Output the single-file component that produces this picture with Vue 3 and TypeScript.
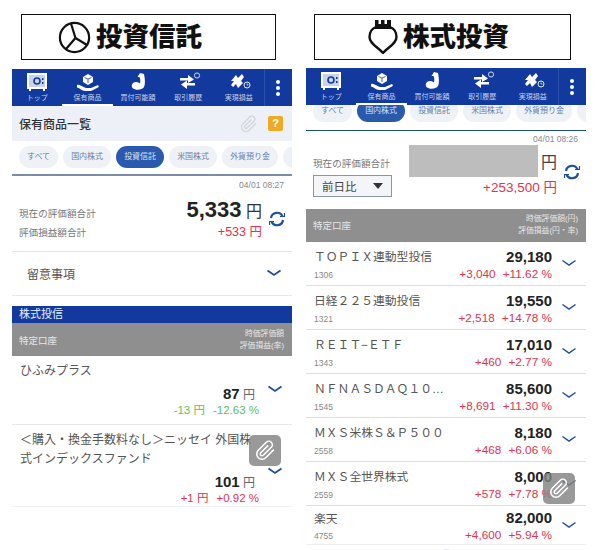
<script setup lang="ts">
interface Stock {
  name: string
  code: string
  price: string
  diff: string
  rate: string
}

const navItems = [
  { label: 'トップ', key: 'safe' },
  { label: '保有商品', key: 'hand' },
  { label: '買付可能額', key: 'arm' },
  { label: '取引履歴', key: 'swap' },
  { label: '実現損益', key: 'gain' },
]

const chips = ['すべて', '国内株式', '投資信託', '米国株式', '外貨預り金']

const stocks: Stock[] = [
  { name: 'ＴＯＰＩＸ連動型投信', code: '1306', price: '29,180', diff: '+3,040', rate: '+11.62 %' },
  { name: '日経２２５連動投信', code: '1321', price: '19,550', diff: '+2,518', rate: '+14.78 %' },
  { name: 'ＲＥＩＴ−ＥＴＦ', code: '1343', price: '17,010', diff: '+460', rate: '+2.77 %' },
  { name: 'ＮＦＮＡＳＤＡＱ１０…', code: '1545', price: '85,600', diff: '+8,691', rate: '+11.30 %' },
  { name: 'ＭＸＳ米株Ｓ＆Ｐ５００', code: '2558', price: '8,180', diff: '+468', rate: '+6.06 %' },
  { name: 'ＭＸＳ全世界株式', code: '2559', price: '8,000', diff: '+578', rate: '+7.78 %' },
  { name: '楽天', code: '4755', price: '82,000', diff: '+4,600', rate: '+5.94 %' },
]

const funds = [
  { name: 'ひふみプラス', price: '87', diff: '-13 円', rate: '-12.63 %', loss: true },
  { name: '＜購入・換金手数料なし＞ニッセイ 外国株式インデックスファンド', price: '101', diff: '+1 円', rate: '+0.92 %', loss: false },
]

const panels = [
  { id: 'fund', title: '投資信託', active: 2 },
  { id: 'stock', title: '株式投資', active: 1 },
]

const clipPath = 'M21.44 11.05l-9.19 9.19a6 6 0 0 1-8.49-8.49l9.19-9.19a4 4 0 0 1 5.66 5.66l-9.2 9.19a2 2 0 0 1-2.83-2.83l8.49-8.48'
</script>

<template>
  <div class="page">
    <section v-for="panel in panels" :key="panel.id" class="column" :class="panel.id">
      <header class="heading">
        <svg v-if="panel.id === 'fund'" width="33" height="33" viewBox="0 0 33 33" fill="none" stroke="#111" stroke-width="2.2">
          <circle cx="16.5" cy="16.5" r="14.6" />
          <path d="M13 2.5 L17.5 17 L29 24 M17.5 17 L8 28" />
        </svg>
        <svg v-else width="30" height="34" viewBox="0 0 30 34" fill="none">
          <path d="M7 0 h3.500 v4 h2.500 V0 h3.500 v4 h2.500 V0 h4 v9 H7 Z" fill="#111" />
          <path d="M8 7 C3 9 1.500 13 1.500 17 C1.500 24 10 27 15 33 C20 27 28.500 24 28.500 17 C28.500 13 27 9 22 7" stroke="#111" stroke-width="2.400" />
        </svg>
        <h1>{{ panel.title }}</h1>
      </header>

      <div class="phone">
        <nav class="nav">
          <div v-for="(item, i) in navItems" :key="item.key" class="nav-item" :class="{ current: i === 1 }">
            <svg width="26" height="20" viewBox="0 0 26 20" fill="#fff">
              <template v-if="item.key === 'safe'">
                <path d="M3 1 h20 v16 h-20 Z" />
                <path d="M5 3 h16 v12 H5 Z" fill="#c9d4ea" />
                <circle cx="13" cy="9" r="3" fill="none" stroke="#123a9e" stroke-width="1.600" />
                <path d="M18 6 h1.500 v2 H18 Z M18 10 h1.500 v2 H18 Z" fill="#123a9e" />
                <path d="M5 17 h2 v2 H5 Z M19 17 h2 v2 h-2 Z" />
              </template>
              <template v-else-if="item.key === 'hand'">
                <path d="M8 5 L13 2 L18 5 V10 L13 13 L8 10 Z" />
                <path d="M13 7 V11 M9.500 5.500 L13 7 L16.500 5.500" stroke="#123a9e" fill="none" stroke-width=".8" />
                <path d="M2 13 C5 12 7 15 11 16 H16 L23 13 C24 14 24 15 23 15.500 L16 19 H10 C7 19 5 16 2 15.500 Z" />
              </template>
              <template v-else-if="item.key === 'arm'">
                <path d="M15 1 L19 2 C20 7 20.500 12 19 15 C17 18.500 10 18.500 7.500 16 C5.500 13 8 9.500 11.500 10 C13 10.300 14 10.800 15 11.500 C15.500 9 15.500 7 14.500 5 L12.500 5 Z" />
              </template>
              <template v-else-if="item.key === 'swap'">
                <path d="M5 6 H13 V3 L19 7.500 L13 11 V8.500 H5 Z" />
                <path d="M20 11 H12 V8.500 L6 12.500 L12 17 V13.500 H20 Z" />
                <circle cx="22" cy="3.500" r="2.600" fill="none" stroke="#fff" stroke-width=".8" />
              </template>
              <template v-else>
                <path d="M5 9 L10 3 L12 6 L16 2 L18 5 L15 9 L17 11 L12 16 L10 12 L7 15 L5 13 L8 9 Z" />
                <circle cx="21" cy="13" r="3" fill="none" stroke="#fff" stroke-width=".9" />
                <path d="M21 11.500 V13 H22.500" fill="none" stroke="#fff" stroke-width=".7" />
              </template>
            </svg>
            <span>{{ item.label }}</span>
          </div>
          <div class="nav-more"><i></i><i></i><i></i></div>
        </nav>

        <div v-if="panel.id === 'fund'" class="title-bar">
          <h2>保有商品一覧</h2>
          <svg class="title-clip" width="18" height="18" viewBox="0 0 24 24" fill="none" stroke="#d3d6dc" stroke-width="1.800">
            <path :d="clipPath" />
          </svg>
          <span class="help">?</span>
        </div>

        <div class="chips">
          <span v-for="(chip, i) in chips" :key="chip" class="chip" :class="{ on: i === panel.active }">{{ chip }}</span>
          <span class="chip"></span>
        </div>

        <template v-if="panel.id === 'fund'">
          <p class="stamp">04/01 08:27</p>
          <div class="summary">
            <div class="summary-text">
              <div class="summary-row">
                <span class="label">現在の評価額合計</span>
                <span class="total"><b>5,333</b> 円</span>
              </div>
              <div class="summary-row low">
                <span class="label">評価損益額合計</span>
                <span class="gain">+533 円</span>
              </div>
            </div>
            <svg class="refresh" width="16" height="16" viewBox="0 0 16 16" fill="none" stroke="#1d4f9c" stroke-width="2.200">
              <path d="M2 7 A6 6 0 0 1 13.500 5.500 M14 9 A6 6 0 0 1 2.500 10.500" />
              <path d="M11 5.500 H15.500 V2" stroke-width="1.200" />
              <path d="M5 10.500 H.5 V14" stroke-width="1.200" />
            </svg>
          </div>
          <div class="notice">
            <span>留意事項</span>
            <svg width="16" height="8" viewBox="0 0 16 8" fill="none" stroke="#1d4f9c" stroke-width="1.800"><path d="M1.500 1.500 L8 6 L14.500 1.500" /></svg>
          </div>
          <div class="band">株式投信</div>
          <div class="table-head">
            <span>特定口座</span>
            <span class="head-right">時価評価額<br />評価損益(率)</span>
          </div>
          <div v-for="(fund, i) in funds" :key="fund.name" class="fund-item" :class="{ last: i === funds.length - 1 }">
            <p class="fund-name">{{ fund.name }}</p>
            <div class="fund-price"><b>{{ fund.price }}</b> 円</div>
            <div class="fund-diff" :class="{ loss: fund.loss }"><span>{{ fund.diff }}</span><span>{{ fund.rate }}</span></div>
            <svg class="fund-chevron" width="16" height="8" viewBox="0 0 16 8" fill="none" stroke="#1d4f9c" stroke-width="1.800"><path d="M1.500 1.500 L8 6 L14.500 1.500" /></svg>
          </div>
        </template>

        <template v-else>
          <p class="stamp">04/01 08:26</p>
          <div class="summary">
            <div class="summary-left">
              <span class="label">現在の評価額合計</span>
              <div class="select">前日比<i></i></div>
            </div>
            <div class="summary-right">
              <div class="hidden-total"><span class="mask"></span><span class="yen">円</span></div>
              <span class="gain">+253,500 円</span>
            </div>
            <svg class="refresh" width="16" height="16" viewBox="0 0 16 16" fill="none" stroke="#1d4f9c" stroke-width="2.200">
              <path d="M2 7 A6 6 0 0 1 13.500 5.500 M14 9 A6 6 0 0 1 2.500 10.500" />
              <path d="M11 5.500 H15.500 V2" stroke-width="1.200" />
              <path d="M5 10.500 H.5 V14" stroke-width="1.200" />
            </svg>
          </div>
          <div class="table-head">
            <span>特定口座</span>
            <span class="head-right">時価評価額(円)<br />評価損益(円・率)</span>
          </div>
          <div v-for="(stock, i) in stocks" :key="stock.code" class="stock-row" :class="{ last: i === stocks.length - 1 }">
            <div class="stock-left">
              <p class="stock-name">{{ stock.name }}</p>
              <p class="stock-code">{{ stock.code }}</p>
            </div>
            <div class="stock-right">
              <b>{{ stock.price }}</b>
              <div class="stock-diff"><span>{{ stock.diff }}</span><span>{{ stock.rate }}</span></div>
            </div>
            <svg class="stock-chevron" width="16" height="8" viewBox="0 0 16 8" fill="none" stroke="#1d4f9c" stroke-width="1.500"><path d="M1.500 1.500 L8 6 L14.500 1.500" /></svg>
          </div>
          <div class="scroll-top"></div>
        </template>

        <div class="clip-float">
          <svg width="21" height="21" viewBox="0 0 24 24" fill="none" stroke="#fff" stroke-width="1.800">
            <path :d="clipPath" />
          </svg>
        </div>
      </div>
    </section>
  </div>
</template>

<style>
html,
body {
  margin: 0;
  background: #fff;
}
</style>

<style scoped>
.page {
  display: flex;
  gap: 14px;
  width: 600px;
  height: 550px;
  padding-left: 12px;
  box-sizing: border-box;
  overflow: hidden;
  font-family: "Liberation Sans", "Noto Sans CJK JP", sans-serif;
  color: #444;
}
.column {
  width: 280px;
  padding-top: 14px;
}
p,
h1,
h2 {
  margin: 0;
  font-weight: 400;
}

.heading {
  display: flex;
  align-items: center;
  height: 46px;
  box-sizing: border-box;
  border: 1.500px solid #111;
  margin: 0 16px 9px 9px;
  padding-left: 36px;
  gap: 5px;
}
.stock .heading {
  margin: 0 15px 8px 8px;
  padding-left: 53px;
  gap: 5px;
}
.heading h1 {
  font-size: 26.500px;
  font-weight: 900;
  color: #111;
  line-height: 1;
}

.phone {
  position: relative;
}

.nav {
  position: relative;
  z-index: 2;
  display: flex;
  height: 37px;
  background: #123a9e;
}
.nav-item {
  width: 50.400px;
  box-sizing: border-box;
  display: flex;
  flex-direction: column;
  align-items: center;
  padding-top: 3px;
  color: #c6d2ec;
  font-size: 7px;
  line-height: 9px;
  border-bottom: 2px solid transparent;
}
.nav-item svg {
  margin-bottom: 1px;
}
.nav-item.current {
  border-bottom-color: #fff;
}
.nav-more {
  flex: 1;
  display: flex;
  flex-direction: column;
  align-items: center;
  justify-content: center;
  gap: 2px;
  border-left: 1px solid #2a50ad;
}
.nav-more i {
  width: 4px;
  height: 4px;
  border-radius: 50%;
  background: #fff;
}

.title-bar {
  display: flex;
  align-items: center;
  height: 35px;
  padding: 0 9px 0 7px;
  background: #edf0f6;
}
.title-bar h2 {
  flex: 1;
  font-size: 12px;
  font-weight: 500;
  color: #333;
}
.title-clip {
  margin-right: 10px;
}
.help {
  width: 15px;
  height: 15px;
  border-radius: 2px;
  background: #eeaa22;
  color: #fff;
  font-size: 11px;
  font-weight: 700;
  line-height: 15px;
  text-align: center;
}

.chips {
  display: flex;
  gap: 5px;
  height: 35px;
  padding: 5px 0 0 7px;
  box-sizing: border-box;
  overflow: hidden;
  border-bottom: 2px solid #7b8cab;
}
.stock .chips {
  margin-top: -5px;
  height: 30.500px;
  padding-top: 0;
  border-bottom: 1.500px solid #1d4f7c;
}
.chip {
  flex: none;
  height: 22px;
  min-width: 20px;
  padding: 0 8px;
  border-radius: 11px;
  background: #eef1f6;
  color: #667fa8;
  font-size: 8px;
  line-height: 22px;
  text-align: center;
}
.chip.on {
  background: #2a5aae;
  color: #d7e2f5;
}
.chip:last-child {
  padding: 0 20px;
}

.stamp {
  padding: 3px 8px 0 0;
  text-align: right;
  font-size: 8.500px;
  line-height: 11px;
  color: #8a8a8a;
}
.fund .stamp {
  padding-top: 4px;
}

.fund .summary {
  display: flex;
  align-items: center;
  height: 60.500px;
  padding: 0 7px 4px 7px;
  box-sizing: border-box;
  border-bottom: 1.500px solid #e6e6e6;
}
.summary-text {
  flex: 1;
}
.summary-row {
  display: flex;
  justify-content: space-between;
  align-items: baseline;
}
.summary-row.low {
  margin-top: 2px;
}
.label {
  font-size: 9.600px;
  color: #777;
}
.total {
  font-size: 16px;
  color: #333;
}
.total b {
  font-size: 22px;
  color: #222;
}
.gain {
  font-size: 12.500px;
  line-height: 15px;
  color: #e0344e;
}
.refresh {
  margin-left: 7px;
  flex: none;
}

.notice {
  display: flex;
  justify-content: space-between;
  align-items: center;
  height: 43px;
  padding: 0 10px 0 15px;
  font-size: 12px;
  color: #555;
  border-bottom: 1.500px solid #e6e6e6;
  margin-bottom: 10.500px;
}

.band {
  height: 17px;
  padding-left: 7px;
  background: #123a9e;
  color: #e8eefa;
  font-size: 11px;
  line-height: 17px;
}

.table-head {
  display: flex;
  justify-content: space-between;
  align-items: center;
  height: 33px;
  padding: 0 8px 0 7px;
  background: #8f8f8f;
  color: #e6e6e6;
  font-size: 9.500px;
}
.head-right {
  font-size: 7.800px;
  line-height: 12px;
  text-align: right;
}

.fund-item {
  position: relative;
  padding: 6px 37px 6px 8px;
  border-bottom: 1.500px solid #e6e6e6;
}
.fund-item.last {
  padding-bottom: 0;
  border-bottom-color: #f2f2f2;
}
.fund-name {
  font-size: 12px;
  line-height: 19px;
  width: 236px;
  color: #555;
}
.fund-price {
  text-align: right;
  font-size: 12px;
  line-height: 16px;
  margin-top: 5px;
  color: #666;
}
.fund-price b {
  font-size: 15px;
  color: #222;
}
.fund-diff {
  display: flex;
  justify-content: flex-end;
  gap: 8px;
  margin-right: -4px;
  font-size: 11.500px;
  line-height: 15px;
  color: #e0344e;
}
.fund-diff.loss {
  color: #5cc05c;
}
.fund-chevron {
  position: absolute;
  right: 9px;
  bottom: 31px;
}

.summary-left,
.summary-right {
  display: flex;
  flex-direction: column;
}
.stock .summary {
  display: flex;
  height: 64px;
  padding-left: 7px;
  box-sizing: border-box;
}
.summary-left {
  width: 95px;
  padding-top: 13px;
}
.summary-left .label {
  line-height: 11px;
}
.select {
  display: flex;
  align-items: center;
  justify-content: space-between;
  width: 79px;
  height: 22px;
  margin-top: 6px;
  padding: 0 8px;
  box-sizing: border-box;
  border: 1px solid #8a96a8;
  background: #f3f5f8;
  font-size: 11.500px;
  color: #444;
}
.select i {
  width: 0;
  height: 0;
  border: 5px solid transparent;
  border-top: 6px solid #333;
  border-bottom: 0;
}
.summary-right {
  align-items: flex-end;
  width: 149px;
}
.hidden-total {
  display: flex;
  align-items: center;
  gap: 3px;
}
.mask {
  width: 129px;
  height: 32px;
  background: #bdbdbd;
}
.yen {
  font-size: 16px;
  width: 16px;
  color: #444;
}
.stock .gain {
  margin-top: 3px;
  font-size: 13.500px;
}
.stock .refresh {
  margin: 19px 0 0 7px;
}

.stock-row {
  display: flex;
  align-items: center;
  height: 44px;
  padding: 0 9px 0 8px;
  box-sizing: border-box;
  border-bottom: 1.500px solid #dedede;
}
.stock-left {
  flex: 1;
  min-width: 0;
  padding-top: 4px;
}
.stock-name {
  font-size: 11.800px;
  line-height: 16px;
  color: #555;
  white-space: nowrap;
}
.stock-code {
  margin-top: 4.500px;
  font-size: 8.500px;
  line-height: 11px;
  color: #888;
}
.stock-right {
  padding-top: 2px;
  text-align: right;
  line-height: 1;
}
.stock-right b {
  display: block;
  font-size: 15px;
  line-height: 17px;
  color: #222;
}
.stock-diff {
  display: flex;
  justify-content: flex-end;
  gap: 7px;
  font-size: 11.800px;
  line-height: 14px;
  margin-top: 2px;
  color: #e0344e;
}
.stock-chevron {
  margin-left: 9px;
}
.stock-row.last {
  height: 39px;
  border-bottom-color: #eee;
}

.scroll-top {
  width: 18px;
  height: 18px;
  margin: 4px 0 0 131px;
  border-radius: 50%;
  background: #e4e9f3;
}

.clip-float {
  position: absolute;
  z-index: 3;
  display: flex;
  align-items: center;
  justify-content: center;
  width: 32px;
  height: 31px;
  border-radius: 5px;
  background: rgba(130, 130, 130, 0.82);
}
.fund .clip-float {
  left: 237px;
  top: 366px;
}
.stock .clip-float {
  left: 237px;
  top: 405px;
}
</style>
